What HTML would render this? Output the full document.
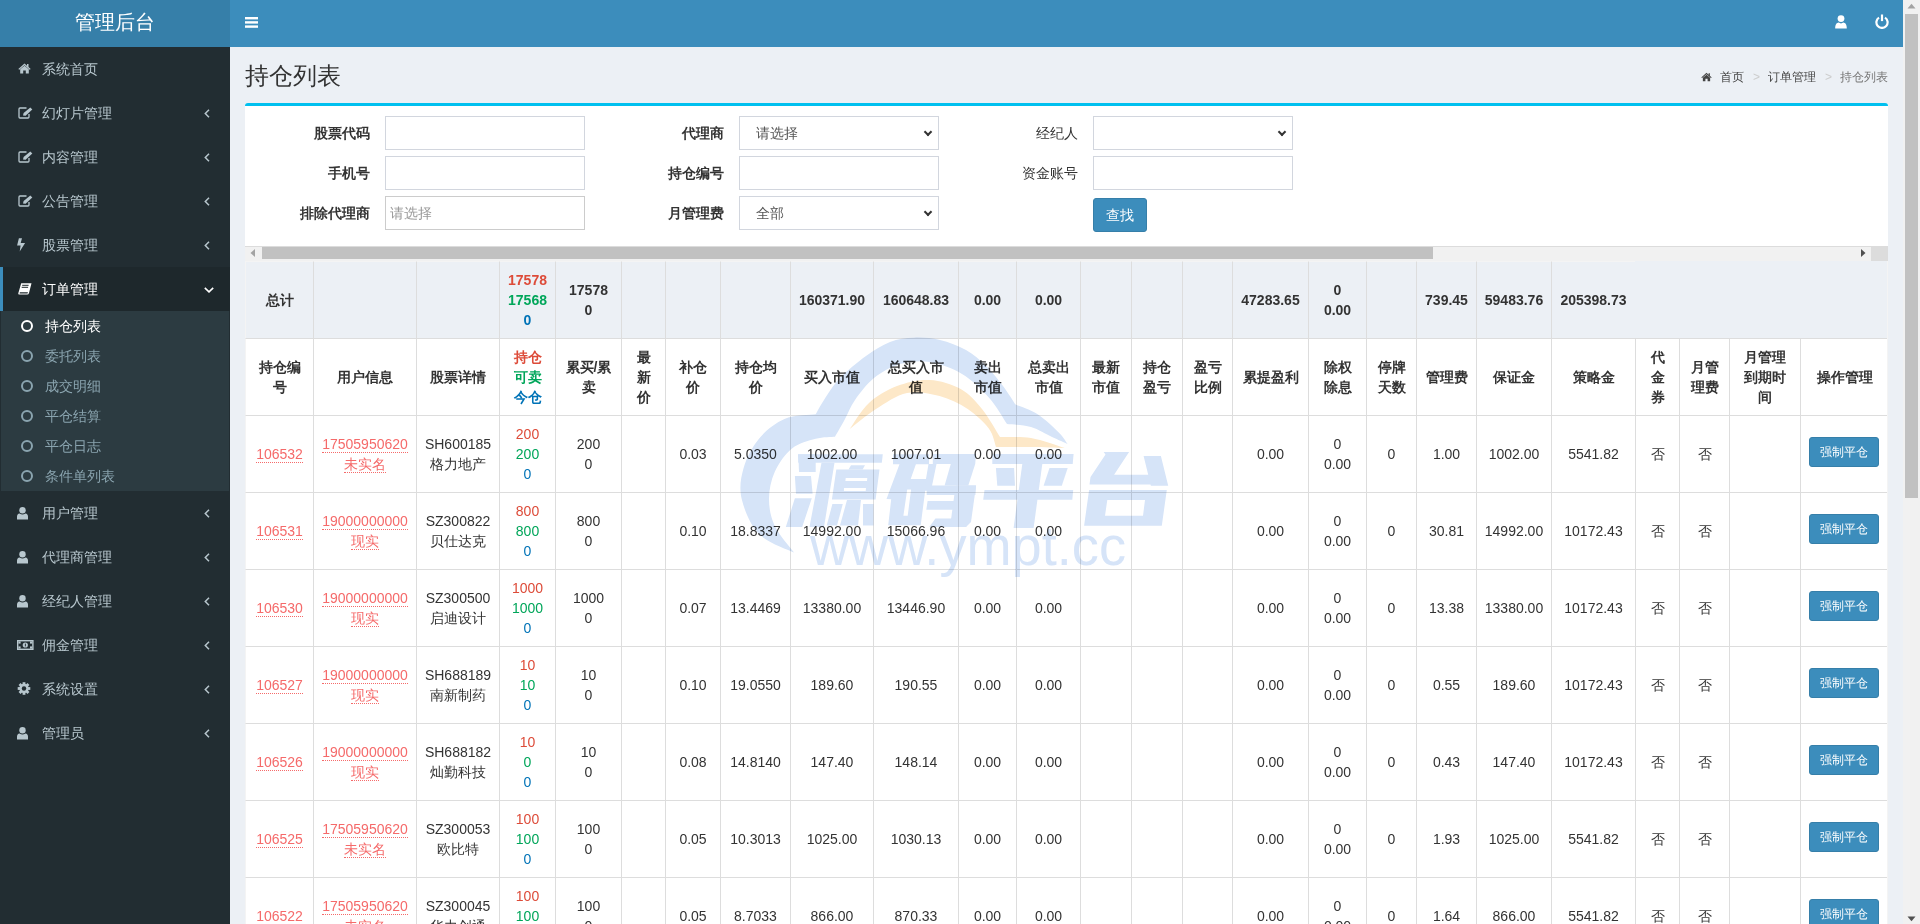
<!DOCTYPE html>
<html><head><meta charset="utf-8">
<style>
*{box-sizing:border-box;margin:0;padding:0}
html,body{width:1920px;height:924px;overflow:hidden;background:#ecf0f5;font-family:"Liberation Sans",sans-serif;font-size:14px;color:#333}
.abs{position:absolute}
#logo{left:0;top:0;width:230px;height:47px;background:#367fa9;color:#fff;font-size:20px;text-align:center;line-height:44px}
#nav{left:230px;top:0;width:1673px;height:47px;background:#3c8dbc}
#side{left:0;top:47px;width:230px;height:877px;background:#222d32}
.mi{position:absolute;left:0;width:230px;height:44px;color:#b8c7ce;font-size:14px;line-height:44px;border-left:3px solid transparent}
.mi .t{position:absolute;left:39px;top:0}
.mi svg{position:absolute}
.mi .ch{position:absolute;left:201px;top:18px}
.mi.act{background:#1e282c;border-left-color:#3c8dbc;color:#fff}
#tree{left:1px;top:311px;width:228px;height:180px;background:#2c3b41}
.si{position:absolute;left:-1px;width:229px;height:30px;line-height:30px;color:#8aa4af}
.si .c{position:absolute;left:21px;top:9px;width:12px;height:12px;border:2px solid #8aa4af;border-radius:50%}
.si .t{position:absolute;left:45px;top:0}
.si.act{color:#fff}
.si.act .c{border-color:#fff;border-width:2.5px}
#title{left:245px;top:58px;font-size:24px;line-height:36px;color:#333}
#bc{left:1700px;top:68px;width:200px;height:18px;font-size:12px;line-height:18px;color:#444;white-space:nowrap}
#bc .gt{color:#ccc}
#box{left:245px;top:103px;width:1643px;height:143px;background:#fff;border-top:3px solid #00c0ef;border-radius:3px 3px 0 0}
.lb{position:absolute;font-weight:bold;text-align:right;width:120px;line-height:34px}
.inp{position:absolute;width:200px;height:34px;border:1px solid #d2d6de;background:#fff;font-size:14px;line-height:32px;padding-left:16px;color:#555}
.sel::after{content:"";box-sizing:border-box;position:absolute;right:7px;top:12px;width:6px;height:6px;border-right:2px solid #333;border-bottom:2px solid #333;transform:rotate(45deg)}
#btn{left:1093px;top:198px;width:54px;height:34px;background:#3c8dbc;border:1px solid #367fa9;border-radius:3px;color:#fff;text-align:center;line-height:32px}
#hs{left:245px;top:246px;width:1626px;height:15px;background:#f1f1f1;border-top:1px solid #dcdcdc}
table{position:absolute;left:245px;top:261px;border-collapse:separate;border-spacing:0;table-layout:fixed;width:1643px}
td{border-left:1px solid #ddd;border-top:1px solid #ddd;text-align:center;vertical-align:middle;padding:8px 0;line-height:20px;height:77px;overflow:hidden;white-space:nowrap}
tr.sum td{background:#ecf0f5;font-weight:bold;border-top-color:#f4f4f4}
tr.sum{background:#ecf0f5}
tr.hd td{font-weight:bold;background:#fff}
tr.dr td{background:#fff}
.r{color:#dd4b39}.g{color:#00a65a}.b{color:#0073b7}
a.l{color:#f56a6a;text-decoration:none;border-bottom:1px dotted #f56a6a}
.bt{display:inline-block;position:relative;top:-2px;margin-left:-1px;width:70px;height:30px;background:#3c8dbc;border:1px solid #367fa9;border-radius:3px;color:#fff;font-size:12px;line-height:28px}
#vs{left:1903px;top:0;width:17px;height:924px;background:#f1f1f1}
#vth{left:1905px;top:14px;width:13px;height:484px;background:#c1c1c1}
td:first-child{border-left-color:#f4f4f4}

</style></head><body>
<div id="logo" class="abs">管理后台</div>
<div id="nav" class="abs"><svg class="abs" style="left:15px;top:17px" width="13" height="11" viewBox="0 0 13 11"><rect x="0" y="0" width="13" height="2.4" fill="#fff"/><rect x="0" y="4.2" width="13" height="2.4" fill="#fff"/><rect x="0" y="8.4" width="13" height="2.4" fill="#fff"/></svg><svg class="abs" style="left:1605px;top:15px" width="12" height="14" viewBox="0 0 12 14"><circle cx="6" cy="3.6" r="3.4" fill="#fff"/><path d="M0.2 13.5 C0.2 9 1.8 7.6 3.6 7.4 L6 8.6 L8.4 7.4 C10.2 7.6 11.8 9 11.8 13.5 Z" fill="#fff"/></svg><svg class="abs" style="left:1645px;top:14px" width="14" height="15" viewBox="0 0 14 15"><path d="M4 3.6 A5.6 5.6 0 1 0 10 3.6" fill="none" stroke="#fff" stroke-width="2.2"/><rect x="5.9" y="0.5" width="2.2" height="6.6" fill="#fff"/></svg></div>
<div id="side" class="abs">
<div class="mi" style="top:0px"><svg style="left:15px;top:16px" width="13" height="11" viewBox="0 0 13 11"><path d="M6.5 0.5 L0.3 6 L1.3 6.8 L6.5 2.3 L11.7 6.8 L12.7 6 L10.5 4 L10.5 1 L9 1 L9 2.7 Z" fill="#b8c7ce"/><path d="M2.2 6.3 L6.5 2.7 L10.8 6.3 L10.8 10.6 L7.8 10.6 L7.8 7.6 L5.2 7.6 L5.2 10.6 L2.2 10.6 Z" fill="#b8c7ce"/></svg><span class="t">系统首页</span></div>
<div class="mi" style="top:44px"><svg style="left:15px;top:16px" width="15" height="12" viewBox="0 0 15 12"><path d="M8.5 1 L2 1 Q1 1 1 2 L1 10 Q1 11 2 11 L10 11 Q11 11 11 10 L11 7" fill="none" stroke="#b8c7ce" stroke-width="1.3"/><path d="M5 8.5 L5.6 6 L12.3 0.4 L14.3 2.4 L7.6 8.8 Z" fill="#b8c7ce"/></svg><span class="t">幻灯片管理</span><svg class="ch" width="6" height="9" viewBox="0 0 6 9"><path d="M5 0.8 L1.3 4.5 L5 8.2" fill="none" stroke="#b8c7ce" stroke-width="1.5"/></svg></div>
<div class="mi" style="top:88px"><svg style="left:15px;top:16px" width="15" height="12" viewBox="0 0 15 12"><path d="M8.5 1 L2 1 Q1 1 1 2 L1 10 Q1 11 2 11 L10 11 Q11 11 11 10 L11 7" fill="none" stroke="#b8c7ce" stroke-width="1.3"/><path d="M5 8.5 L5.6 6 L12.3 0.4 L14.3 2.4 L7.6 8.8 Z" fill="#b8c7ce"/></svg><span class="t">内容管理</span><svg class="ch" width="6" height="9" viewBox="0 0 6 9"><path d="M5 0.8 L1.3 4.5 L5 8.2" fill="none" stroke="#b8c7ce" stroke-width="1.5"/></svg></div>
<div class="mi" style="top:132px"><svg style="left:15px;top:16px" width="15" height="12" viewBox="0 0 15 12"><path d="M8.5 1 L2 1 Q1 1 1 2 L1 10 Q1 11 2 11 L10 11 Q11 11 11 10 L11 7" fill="none" stroke="#b8c7ce" stroke-width="1.3"/><path d="M5 8.5 L5.6 6 L12.3 0.4 L14.3 2.4 L7.6 8.8 Z" fill="#b8c7ce"/></svg><span class="t">公告管理</span><svg class="ch" width="6" height="9" viewBox="0 0 6 9"><path d="M5 0.8 L1.3 4.5 L5 8.2" fill="none" stroke="#b8c7ce" stroke-width="1.5"/></svg></div>
<div class="mi" style="top:176px"><svg style="left:14px;top:15px" width="9" height="14" viewBox="0 0 9 14"><path d="M1.9 0.2 L5 0.2 L3.7 4.9 L8.1 4.9 L2.7 13.6 L3.6 7.5 L0.1 7.5 Z" fill="#b8c7ce"/></svg><span class="t">股票管理</span><svg class="ch" width="6" height="9" viewBox="0 0 6 9"><path d="M5 0.8 L1.3 4.5 L5 8.2" fill="none" stroke="#b8c7ce" stroke-width="1.5"/></svg></div>
<div class="mi act" style="top:220px"><svg style="left:15px;top:16px" width="14" height="12" viewBox="0 0 14 12"><path d="M3.2 0.3 L13.5 0.3 L11 10 Q10.6 11.6 9.2 11.6 L1.2 11.6 Q0 11.6 0.3 10.3 Z" fill="#fff"/><path d="M4.2 2.3 L10.6 2.3 M3.7 4.3 L10.1 4.3" stroke="#1e282c" stroke-width="1"/><path d="M1.8 9.2 L10 9.2 L9.5 10.5 L1.6 10.5 Z" fill="#1e282c"/></svg><span class="t">订单管理</span><svg class="ch" style="left:201px;top:20px" width="10" height="6" viewBox="0 0 10 6"><path d="M0.8 0.8 L5 4.8 L9.2 0.8" fill="none" stroke="#fff" stroke-width="1.6"/></svg></div>
</div>
<div id="tree" class="abs">
<div class="si act" style="top:0px"><span class="c"></span><span class="t">持仓列表</span></div>
<div class="si" style="top:30px"><span class="c"></span><span class="t">委托列表</span></div>
<div class="si" style="top:60px"><span class="c"></span><span class="t">成交明细</span></div>
<div class="si" style="top:90px"><span class="c"></span><span class="t">平仓结算</span></div>
<div class="si" style="top:120px"><span class="c"></span><span class="t">平仓日志</span></div>
<div class="si" style="top:150px"><span class="c"></span><span class="t">条件单列表</span></div>
</div>
<div class="abs" style="left:0;top:491px;width:230px;height:433px">
<div class="mi" style="top:0px"><svg style="left:14px;top:16px" width="11" height="13" viewBox="0 0 11 13"><circle cx="5.5" cy="3.3" r="3.2" fill="#b8c7ce"/><path d="M0 12.6 L0 9.6 Q0 6.9 2.6 6.5 Q4 7.5 5.5 7.5 Q7 7.5 8.4 6.5 Q11 6.9 11 9.6 L11 12.6 Z" fill="#b8c7ce"/></svg><span class="t">用户管理</span><svg class="ch" width="6" height="9" viewBox="0 0 6 9"><path d="M5 0.8 L1.3 4.5 L5 8.2" fill="none" stroke="#b8c7ce" stroke-width="1.5"/></svg></div>
<div class="mi" style="top:44px"><svg style="left:14px;top:16px" width="11" height="13" viewBox="0 0 11 13"><circle cx="5.5" cy="3.3" r="3.2" fill="#b8c7ce"/><path d="M0 12.6 L0 9.6 Q0 6.9 2.6 6.5 Q4 7.5 5.5 7.5 Q7 7.5 8.4 6.5 Q11 6.9 11 9.6 L11 12.6 Z" fill="#b8c7ce"/></svg><span class="t">代理商管理</span><svg class="ch" width="6" height="9" viewBox="0 0 6 9"><path d="M5 0.8 L1.3 4.5 L5 8.2" fill="none" stroke="#b8c7ce" stroke-width="1.5"/></svg></div>
<div class="mi" style="top:88px"><svg style="left:14px;top:16px" width="11" height="13" viewBox="0 0 11 13"><circle cx="5.5" cy="3.3" r="3.2" fill="#b8c7ce"/><path d="M0 12.6 L0 9.6 Q0 6.9 2.6 6.5 Q4 7.5 5.5 7.5 Q7 7.5 8.4 6.5 Q11 6.9 11 9.6 L11 12.6 Z" fill="#b8c7ce"/></svg><span class="t">经纪人管理</span><svg class="ch" width="6" height="9" viewBox="0 0 6 9"><path d="M5 0.8 L1.3 4.5 L5 8.2" fill="none" stroke="#b8c7ce" stroke-width="1.5"/></svg></div>
<div class="mi" style="top:132px"><svg style="left:14px;top:17px" width="17" height="10" viewBox="0 0 17 10"><rect x="0" y="0" width="16.6" height="10" fill="#b8c7ce"/><rect x="1.4" y="1.4" width="13.8" height="7.2" fill="#222d32"/><rect x="1.4" y="1.4" width="2.2" height="2.2" fill="#b8c7ce"/><rect x="13" y="1.4" width="2.2" height="2.2" fill="#b8c7ce"/><rect x="1.4" y="6.4" width="2.2" height="2.2" fill="#b8c7ce"/><rect x="13" y="6.4" width="2.2" height="2.2" fill="#b8c7ce"/><circle cx="8.3" cy="5" r="2.6" fill="#b8c7ce"/><rect x="7.9" y="3.6" width="0.9" height="2.8" fill="#222d32"/></svg><span class="t">佣金管理</span><svg class="ch" width="6" height="9" viewBox="0 0 6 9"><path d="M5 0.8 L1.3 4.5 L5 8.2" fill="none" stroke="#b8c7ce" stroke-width="1.5"/></svg></div>
<div class="mi" style="top:176px"><svg style="left:14px;top:15px" width="14" height="13" viewBox="0 0 14 13"><g fill="#b8c7ce" transform="translate(7 6.5)"><rect x="-1.4" y="-6.3" width="2.8" height="12.6"/><rect x="-1.4" y="-6.3" width="2.8" height="12.6" transform="rotate(45)"/><rect x="-1.4" y="-6.3" width="2.8" height="12.6" transform="rotate(90)"/><rect x="-1.4" y="-6.3" width="2.8" height="12.6" transform="rotate(135)"/><circle r="4.7"/></g><circle cx="7" cy="6.5" r="2.2" fill="#222d32"/></svg><span class="t">系统设置</span><svg class="ch" width="6" height="9" viewBox="0 0 6 9"><path d="M5 0.8 L1.3 4.5 L5 8.2" fill="none" stroke="#b8c7ce" stroke-width="1.5"/></svg></div>
<div class="mi" style="top:220px"><svg style="left:14px;top:16px" width="11" height="13" viewBox="0 0 11 13"><circle cx="5.5" cy="3.3" r="3.2" fill="#b8c7ce"/><path d="M0 12.6 L0 9.6 Q0 6.9 2.6 6.5 Q4 7.5 5.5 7.5 Q7 7.5 8.4 6.5 Q11 6.9 11 9.6 L11 12.6 Z" fill="#b8c7ce"/></svg><span class="t">管理员</span><svg class="ch" width="6" height="9" viewBox="0 0 6 9"><path d="M5 0.8 L1.3 4.5 L5 8.2" fill="none" stroke="#b8c7ce" stroke-width="1.5"/></svg></div>
</div>
<div id="title" class="abs">持仓列表</div>
<div id="bc" class="abs"><svg style="position:absolute;left:1px;top:4px" width="11" height="10" viewBox="0 0 13 11"><path d="M6.5 0.5 L0.3 6 L1.3 6.8 L6.5 2.3 L11.7 6.8 L12.7 6 L10.5 4 L10.5 1 L9 1 L9 2.7 Z" fill="#444"/><path d="M2.2 6.3 L6.5 2.7 L10.8 6.3 L10.8 10.6 L7.8 10.6 L7.8 7.6 L5.2 7.6 L5.2 10.6 L2.2 10.6 Z" fill="#444"/></svg><span class="abs" style="left:20px;top:0">首页</span><span class="abs gt" style="left:53px;top:0">&gt;</span><span class="abs" style="left:68px;top:0">订单管理</span><span class="abs gt" style="left:125px;top:0">&gt;</span><span class="abs" style="left:140px;top:0;color:#777">持仓列表</span></div>
<div id="box" class="abs"></div>
<div class="lb" style="left:250px;top:116px;">股票代码</div>
<div class="inp" style="left:385px;top:116px;"></div>
<div class="lb" style="left:250px;top:156px;">手机号</div>
<div class="inp" style="left:385px;top:156px;"></div>
<div class="lb" style="left:250px;top:196px;">排除代理商</div>
<div class="inp" style="left:385px;top:196px;color:#999;padding-left:4px;border-color:#ccc">请选择</div>
<div class="lb" style="left:604px;top:116px;">代理商</div>
<div class="inp sel" style="left:739px;top:116px;">请选择</div>
<div class="lb" style="left:604px;top:156px;">持仓编号</div>
<div class="inp" style="left:739px;top:156px;"></div>
<div class="lb" style="left:604px;top:196px;">月管理费</div>
<div class="inp sel" style="left:739px;top:196px;">全部</div>
<div class="lb" style="left:958px;top:116px;font-weight:normal;">经纪人</div>
<div class="inp sel" style="left:1093px;top:116px;"></div>
<div class="lb" style="left:958px;top:156px;font-weight:normal;">资金账号</div>
<div class="inp" style="left:1093px;top:156px;"></div>
<div id="btn" class="abs">查找</div>
<div id="hs" class="abs"></div>
<div class="abs" style="left:262px;top:247px;width:1171px;height:12px;background:#c1c1c1"></div>
<svg class="abs" style="left:250px;top:249px" width="6" height="8" viewBox="0 0 6 8"><path d="M5 0 L0.5 4 L5 8 Z" fill="#a3a3a3"/></svg>
<svg class="abs" style="left:1860px;top:249px" width="6" height="8" viewBox="0 0 6 8"><path d="M1 0 L5.5 4 L1 8 Z" fill="#505050"/></svg>
<div class="abs" style="left:1871px;top:246px;width:17px;height:15px;background:#dcdcdc"></div>
<table><colgroup><col style="width:68px"><col style="width:103px"><col style="width:83px"><col style="width:56px"><col style="width:66px"><col style="width:44px"><col style="width:55px"><col style="width:70px"><col style="width:83px"><col style="width:85px"><col style="width:58px"><col style="width:64px"><col style="width:51px"><col style="width:51px"><col style="width:50px"><col style="width:76px"><col style="width:58px"><col style="width:50px"><col style="width:60px"><col style="width:75px"><col style="width:84px"><col style="width:44px"><col style="width:50px"><col style="width:71px"><col style="width:88px"></colgroup>
<tr class="sum"><td>总计</td><td></td><td></td><td><span class="r">17578</span><br><span class="g">17568</span><br><span class="b">0</span></td><td>17578<br>0</td><td></td><td></td><td></td><td>160371.90</td><td>160648.83</td><td>0.00</td><td>0.00</td><td></td><td></td><td></td><td>47283.65</td><td>0<br>0.00</td><td></td><td>739.45</td><td>59483.76</td><td>205398.73</td></tr>
<tr class="hd"><td>持仓编<br>号</td><td>用户信息</td><td>股票详情</td><td><span class="r">持仓</span><br><span class="g">可卖</span><br><span class="b">今仓</span></td><td>累买/累<br>卖</td><td>最<br>新<br>价</td><td>补仓<br>价</td><td>持仓均<br>价</td><td>买入市值</td><td>总买入市<br>值</td><td>卖出<br>市值</td><td>总卖出<br>市值</td><td>最新<br>市值</td><td>持仓<br>盈亏</td><td>盈亏<br>比例</td><td>累提盈利</td><td>除权<br>除息</td><td>停牌<br>天数</td><td>管理费</td><td>保证金</td><td>策略金</td><td>代<br>金<br>券</td><td>月管<br>理费</td><td>月管理<br>到期时<br>间</td><td>操作管理</td></tr>
<tr class="dr"><td><a class="l">106532</a></td><td><a class="l">17505950620</a><br><a class="l">未实名</a></td><td>SH600185<br>格力地产</td><td><span class="r">200</span><br><span class="g">200</span><br><span class="b">0</span></td><td>200<br>0</td><td></td><td>0.03</td><td>5.0350</td><td>1002.00</td><td>1007.01</td><td>0.00</td><td>0.00</td><td></td><td></td><td></td><td>0.00</td><td>0<br>0.00</td><td>0</td><td>1.00</td><td>1002.00</td><td>5541.82</td><td>否</td><td>否</td><td></td><td><span class="bt">强制平仓</span></td></tr>
<tr class="dr"><td><a class="l">106531</a></td><td><a class="l">19000000000</a><br><a class="l">现实</a></td><td>SZ300822<br>贝仕达克</td><td><span class="r">800</span><br><span class="g">800</span><br><span class="b">0</span></td><td>800<br>0</td><td></td><td>0.10</td><td>18.8337</td><td>14992.00</td><td>15066.96</td><td>0.00</td><td>0.00</td><td></td><td></td><td></td><td>0.00</td><td>0<br>0.00</td><td>0</td><td>30.81</td><td>14992.00</td><td>10172.43</td><td>否</td><td>否</td><td></td><td><span class="bt">强制平仓</span></td></tr>
<tr class="dr"><td><a class="l">106530</a></td><td><a class="l">19000000000</a><br><a class="l">现实</a></td><td>SZ300500<br>启迪设计</td><td><span class="r">1000</span><br><span class="g">1000</span><br><span class="b">0</span></td><td>1000<br>0</td><td></td><td>0.07</td><td>13.4469</td><td>13380.00</td><td>13446.90</td><td>0.00</td><td>0.00</td><td></td><td></td><td></td><td>0.00</td><td>0<br>0.00</td><td>0</td><td>13.38</td><td>13380.00</td><td>10172.43</td><td>否</td><td>否</td><td></td><td><span class="bt">强制平仓</span></td></tr>
<tr class="dr"><td><a class="l">106527</a></td><td><a class="l">19000000000</a><br><a class="l">现实</a></td><td>SH688189<br>南新制药</td><td><span class="r">10</span><br><span class="g">10</span><br><span class="b">0</span></td><td>10<br>0</td><td></td><td>0.10</td><td>19.0550</td><td>189.60</td><td>190.55</td><td>0.00</td><td>0.00</td><td></td><td></td><td></td><td>0.00</td><td>0<br>0.00</td><td>0</td><td>0.55</td><td>189.60</td><td>10172.43</td><td>否</td><td>否</td><td></td><td><span class="bt">强制平仓</span></td></tr>
<tr class="dr"><td><a class="l">106526</a></td><td><a class="l">19000000000</a><br><a class="l">现实</a></td><td>SH688182<br>灿勤科技</td><td><span class="r">10</span><br><span class="g">0</span><br><span class="b">0</span></td><td>10<br>0</td><td></td><td>0.08</td><td>14.8140</td><td>147.40</td><td>148.14</td><td>0.00</td><td>0.00</td><td></td><td></td><td></td><td>0.00</td><td>0<br>0.00</td><td>0</td><td>0.43</td><td>147.40</td><td>10172.43</td><td>否</td><td>否</td><td></td><td><span class="bt">强制平仓</span></td></tr>
<tr class="dr"><td><a class="l">106525</a></td><td><a class="l">17505950620</a><br><a class="l">未实名</a></td><td>SZ300053<br>欧比特</td><td><span class="r">100</span><br><span class="g">100</span><br><span class="b">0</span></td><td>100<br>0</td><td></td><td>0.05</td><td>10.3013</td><td>1025.00</td><td>1030.13</td><td>0.00</td><td>0.00</td><td></td><td></td><td></td><td>0.00</td><td>0<br>0.00</td><td>0</td><td>1.93</td><td>1025.00</td><td>5541.82</td><td>否</td><td>否</td><td></td><td><span class="bt">强制平仓</span></td></tr>
<tr class="dr"><td><a class="l">106522</a></td><td><a class="l">17505950620</a><br><a class="l">未实名</a></td><td>SZ300045<br>华力创通</td><td><span class="r">100</span><br><span class="g">100</span><br><span class="b">0</span></td><td>100<br>0</td><td></td><td>0.05</td><td>8.7033</td><td>866.00</td><td>870.33</td><td>0.00</td><td>0.00</td><td></td><td></td><td></td><td>0.00</td><td>0<br>0.00</td><td>0</td><td>1.64</td><td>866.00</td><td>5541.82</td><td>否</td><td>否</td><td></td><td><span class="bt">强制平仓</span></td></tr>
</table>
<div class="abs" style="left:1887px;top:261px;width:1px;height:663px;background:#f4f4f4"></div>
<svg class="abs" style="left:0;top:0;mix-blend-mode:multiply;pointer-events:none" width="1920" height="924" viewBox="0 0 1920 924"><path d="M794 552.6 C788.2 549.5 767.7 542.9 759.0 534.0 C750.3 525.1 744.3 510.0 741.7 499.0 C739.1 488.0 740.7 478.1 743.6 468.0 C746.5 457.9 752.2 446.9 759.0 438.7 C765.8 430.5 775.0 423.1 784.5 419.0 C794.0 414.9 810.5 415.1 815.7 414.3 C817.1 411.9 820.0 406.1 824.0 400.0 C828.0 393.9 833.0 385.3 840.0 378.0 C847.0 370.7 857.7 362.0 866.0 356.0 C874.3 350.0 882.0 345.1 890.0 342.0 C898.0 338.9 905.7 338.0 914.0 337.7 C922.3 337.4 931.3 337.9 940.0 340.0 C948.7 342.1 958.3 345.7 966.0 350.0 C973.7 354.3 979.8 360.0 986.0 366.0 C992.2 372.0 998.1 379.6 1003.0 386.0 C1007.9 392.4 1013.4 401.5 1015.5 404.6 C1019.2 406.2 1030.8 409.7 1038.0 414.4 C1045.2 419.1 1054.1 427.8 1059.0 432.7 C1063.9 437.6 1066.2 442.1 1067.6 444.0 C1065.0 442.8 1058.1 439.8 1052.0 437.0 C1045.9 434.2 1038.5 429.2 1031.0 427.0 C1023.5 424.8 1011.0 424.5 1007.0 424.0 C1004.0 419.6 996.3 405.8 988.8 397.5 C981.3 389.2 971.8 379.9 962.0 374.0 C952.2 368.1 940.3 363.7 930.0 362.0 C919.7 360.3 909.3 361.3 900.0 364.0 C890.7 366.7 881.5 372.0 874.0 378.0 C866.5 384.0 859.8 393.2 855.0 400.0 C850.2 406.8 848.3 412.9 845.0 419.0 C841.7 425.1 836.7 433.8 835.0 436.7 C831.8 437.0 822.9 436.8 815.7 438.7 C808.5 440.6 798.8 442.9 792.0 448.4 C785.2 453.9 778.6 463.4 774.8 471.8 C771.0 480.2 769.0 490.0 769.0 499.0 C769.0 508.0 770.6 517.1 774.8 526.0 C779.0 534.9 790.8 548.2 794.0 552.6 Z" fill="#d6e4f8"/><path d="M849.7 429 C852.9 424.7 861.1 410.2 869.0 403.0 C876.9 395.8 886.9 389.8 897.0 386.0 C907.1 382.2 919.1 379.5 929.7 380.0 C940.3 380.5 952.0 384.2 960.7 389.0 C969.4 393.8 975.2 400.8 981.8 408.8 C988.3 416.8 997.0 432.3 1000.0 437.0 C1005.2 437.2 1020.2 436.2 1031.0 438.0 C1041.8 439.8 1059.2 446.3 1064.8 448.0 C1059.2 447.8 1042.5 447.2 1031.0 447.0 C1019.5 446.8 1001.8 447.0 996.0 447.0 C994.8 443.9 993.5 434.8 988.8 428.5 C984.1 422.2 975.9 414.4 967.7 409.0 C959.5 403.6 949.7 398.7 939.6 396.0 C929.5 393.3 917.6 390.8 907.0 393.0 C896.4 395.2 885.5 403.0 876.0 409.0 C866.5 415.0 854.1 425.7 849.7 429.0 Z" fill="#fde8c8"/><path d="M798 454.25 L882.8 454.25 L881.8 462.8 L798.3 462.8 Z" fill="#d6e4f8" fill-rule="evenodd"/><path d="M798.3 454.25 L815.7 454.25 L815.7 472 L799 472 Z" fill="#d6e4f8" fill-rule="evenodd"/><path d="M794.9 476.1 L811 476.1 L812.6 493.7 L796 493.7 Z" fill="#d6e4f8" fill-rule="evenodd"/><path d="M794.9 498.2 L811.8 498.2 L802.2 527 L785.8 527 Z" fill="#d6e4f8" fill-rule="evenodd"/><path d="M821.5 462.8 L834.5 462.8 L824 527 L809.5 527 Z" fill="#d6e4f8" fill-rule="evenodd"/><path d="M851 465.2 L865 465.2 L862.6 469.6 L848.5 469.6 Z" fill="#d6e4f8" fill-rule="evenodd"/><path d="M836.3 469.4 L879.5 469.4 L875.6 499.5 L831.9 499.5 Z M845.7 478 L867.3 478 L867 481 L845.4 481 Z M844 488 L866 488 L865.7 491.1 L843.9 491.1 Z" fill="#d6e4f8" fill-rule="evenodd"/><path d="M832.4 504 L842.8 504 L837 525.5 L826.7 525.5 Z" fill="#d6e4f8" fill-rule="evenodd"/><path d="M847 500 L861 500 L858 525.5 L840 525.5 Z" fill="#d6e4f8" fill-rule="evenodd"/><path d="M863 504 L873.5 504 L873.5 525.5 L863 525.5 Z" fill="#d6e4f8" fill-rule="evenodd"/><path d="M893 454.3 L929.2 454.3 L929 464.3 L915.9 464.3 L910.7 479 L926.7 479 L920.7 525.3 L888.2 525.3 L891.2 499.3 L886.5 498.9 L899.5 464.3 L893 464.3 Z M907.2 489.4 L911.1 489.4 L907.7 515.7 L903.4 515.7 Z" fill="#d6e4f8" fill-rule="evenodd"/><path d="M932.8 453.9 L976.1 453.9 L975.2 463.9 L932.8 463.9 Z" fill="#d6e4f8" fill-rule="evenodd"/><path d="M950.8 463.9 L975.2 463.9 L968.3 485.5 L944.6 485.5 Z" fill="#d6e4f8" fill-rule="evenodd"/><path d="M928.5 463.9 L936.5 463.9 L931 490.7 L924 490.7 Z" fill="#d6e4f8" fill-rule="evenodd"/><path d="M926.7 485.5 L976 485.5 L975.4 495 L926.7 495 Z" fill="#d6e4f8" fill-rule="evenodd"/><path d="M927.6 501 L955.7 501 L954.8 509.7 L926.3 509.7 Z" fill="#d6e4f8" fill-rule="evenodd"/><path d="M935.4 518.4 L970 518.4 L966 527 L929.3 527 Z" fill="#d6e4f8" fill-rule="evenodd"/><path d="M956.2 485.5 L976.1 485.5 L971 522 L966 527 L950 527 L955 490 Z" fill="#d6e4f8" fill-rule="evenodd"/><path d="M992.3 453.9 L1073.6 453.9 L1072.7 463.9 L992.3 463.9 Z" fill="#d6e4f8" fill-rule="evenodd"/><path d="M995.9 468 L1014.1 468 L1015 485.7 L997.3 485.7 Z" fill="#d6e4f8" fill-rule="evenodd"/><path d="M1049.5 468 L1067.7 468 L1061.8 485.7 L1043.6 485.7 Z" fill="#d6e4f8" fill-rule="evenodd"/><path d="M984.5 490 L1073.2 490 L1072.3 499.8 L983.2 499.8 Z" fill="#d6e4f8" fill-rule="evenodd"/><path d="M1022.3 463.9 L1042.3 463.9 L1033.6 528 L1013.6 528 Z" fill="#d6e4f8" fill-rule="evenodd"/><path d="M1103.6 452.1 L1129.1 452.1 L1114.1 474.8 L1148.2 474.8 L1143.6 456 L1160.9 456 L1168.2 485.7 L1150.9 485.7 L1150.5 484.4 L1089.5 484.4 L1090.5 477.1 L1105.5 454.4 Z" fill="#d6e4f8" fill-rule="evenodd"/><path d="M1089.1 490 L1166.8 490 L1161.8 525.7 L1084.1 525.7 Z M1107.3 500 L1145 500 L1143 515.7 L1105 515.7 Z" fill="#d6e4f8" fill-rule="evenodd"/><text x="810" y="565" font-family="Liberation Sans" font-size="56" fill="#d6e4f8" textLength="316" lengthAdjust="spacingAndGlyphs">www.ympt.cc</text></svg>
<div id="vs" class="abs"></div><div id="vth" class="abs"></div>
<svg class="abs" style="left:1907px;top:3px" width="9" height="6" viewBox="0 0 9 6"><path d="M0.5 5.5 L4.5 0.8 L8.5 5.5 Z" fill="#a3a3a3"/></svg>
<svg class="abs" style="left:1907px;top:916px" width="9" height="6" viewBox="0 0 9 6"><path d="M0.5 0.5 L4.5 5.2 L8.5 0.5 Z" fill="#505050"/></svg>
</body></html>
